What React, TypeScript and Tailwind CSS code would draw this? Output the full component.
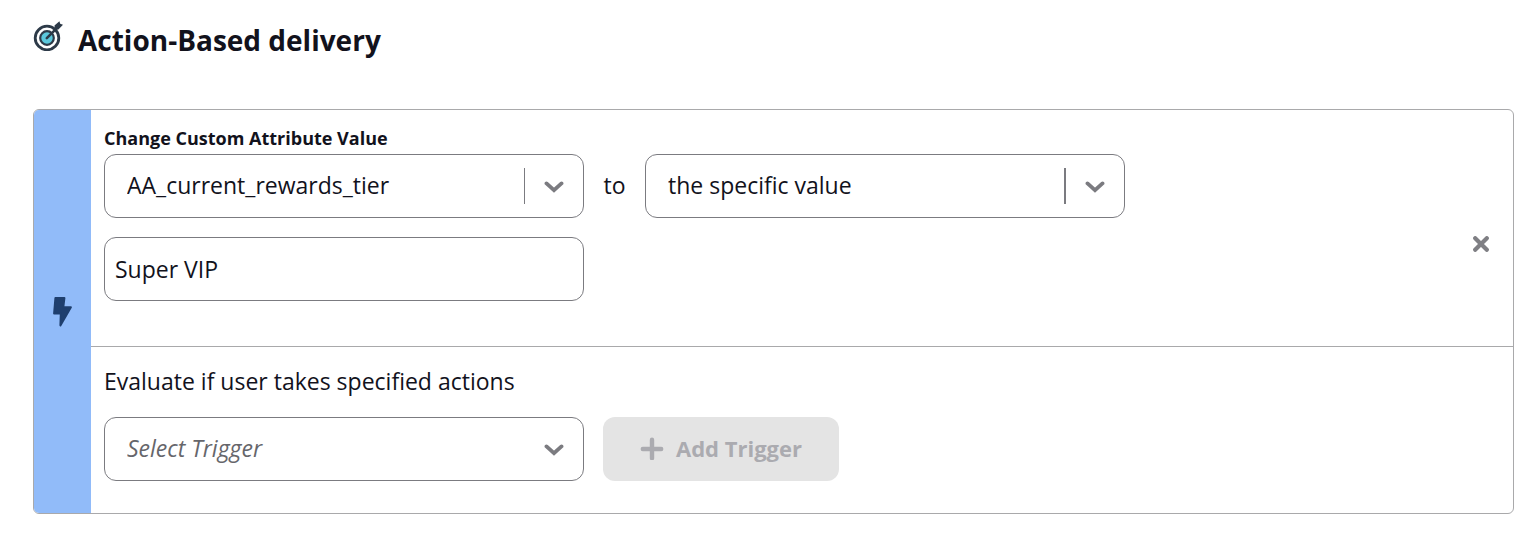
import { useState, type ReactNode } from "react";

function TargetIcon() {
  return (
    <svg viewBox="0 0 30 30" className="size-[30px]" fill="none" aria-hidden="true">
      <circle cx="14" cy="17" r="11.8" stroke="#2d3a48" strokeWidth="2.8" />
      <circle cx="14" cy="17" r="6.8" fill="#5cc8dc" stroke="#2d3a48" strokeWidth="2.2" />
      <path d="M13.8 17.2 25.4 5.6" stroke="#2d3a48" strokeWidth="2.6" strokeLinecap="round" />
      <path d="M21.8 8.8 21.5 4.6 26.4.2l.8 2.6 2.8.9-4.6 4.8Z" fill="#2d3a48" />
    </svg>
  );
}

function BoltIcon() {
  return (
    <svg viewBox="0 0 20 30" className="h-[30px] w-5" fill="#1f3f6e" aria-hidden="true">
      <path
        d="M2.4 1.1h9L10.3 10.3h7.6L7.4 28.4 7.8 16.6H1.1Z"
        stroke="#1f3f6e"
        strokeWidth="2"
        strokeLinejoin="round"
      />
    </svg>
  );
}

function ChevronIcon() {
  return (
    <svg viewBox="0 0 20 14" className="h-3.5 w-5" fill="none" aria-hidden="true">
      <path d="M2.5 4.4 10 11.2l7.5-6.8" stroke="#7b7b80" strokeWidth="3.8" strokeLinecap="round" />
    </svg>
  );
}

function CloseIcon() {
  return (
    <svg viewBox="0 0 16 16" className="size-4" fill="none" aria-hidden="true">
      <path d="m2.2 2.2 11.6 11.6M13.8 2.2 2.2 13.8" stroke="#7f7f84" strokeWidth="4.2" strokeLinecap="round" />
    </svg>
  );
}

function PlusIcon() {
  return (
    <svg viewBox="0 0 24 24" className="size-6" fill="none" aria-hidden="true">
      <path d="M12 3.8v18.4M2.8 13h18.4" stroke="#ababb0" strokeWidth="4.4" strokeLinecap="round" />
    </svg>
  );
}

type DropdownProps = {
  id: string;
  label?: string;
  value: string;
  onChange: (value: string) => void;
  divider?: string;
  className?: string;
  children: ReactNode;
};

function Dropdown({ id, label, value, onChange, divider = "", className = "", children }: DropdownProps) {
  return (
    <div className="grid w-[480px] max-w-full items-center">
      <select
        id={id}
        aria-label={label}
        value={value}
        onChange={(e) => onChange(e.target.value)}
        className={`col-start-1 row-start-1 h-16 w-full appearance-none rounded-xl border border-[#7b7b80] bg-white pr-16 pb-0.5 pl-[22px] text-[23px] ${className}`}
      >
        {children}
      </select>
      <span
        className={`pointer-events-none col-start-1 row-start-1 flex h-9 items-center justify-self-end pr-5 pl-[19px] ${divider}`}
      >
        <ChevronIcon />
      </span>
    </div>
  );
}

export default function App() {
  const [attribute, setAttribute] = useState("tier");
  const [change, setChange] = useState("specific");
  const [value, setValue] = useState("Super VIP");
  const [trigger, setTrigger] = useState("");

  return (
    <main className="bg-white pt-5 pr-[22px] pb-[22px] pl-[33px] font-['Open_Sans','Noto_Sans',sans-serif] text-[23px] text-[#12121c]">
      <header className="mb-[49px] flex h-10 items-center gap-[15px]">
        <span className="pb-2">
          <TargetIcon />
        </span>
        <h1 className="text-[28px] leading-10 font-bold">Action-Based delivery</h1>
      </header>

      <section className="flex overflow-hidden rounded-md border border-[#a9a9ab]">
        <div className="flex w-[57px] shrink-0 items-center justify-center bg-[#91bbf9]">
          <BoltIcon />
        </div>

        <div className="min-w-0 flex-1">
          <div className="flex border-b border-[#a9a9ab] pr-4 pl-[13px]">
            <div className="min-w-0 flex-1 pt-4 pb-[45px]">
              <label htmlFor="attribute" className="mb-1 block w-fit text-lg leading-6 font-bold">
                Change Custom Attribute Value
              </label>
              <div className="flex items-center">
                <Dropdown id="attribute" value={attribute} onChange={setAttribute} divider="border-l border-[#7b7b80]">
                  <option value="tier">AA_current_rewards_tier</option>
                </Dropdown>
                <span className="w-[61px] shrink-0 pb-0.5 text-center">to</span>
                <Dropdown
                  id="change"
                  label="Type of change"
                  value={change}
                  onChange={setChange}
                  divider="border-l-2 border-[#7b7b80]"
                >
                  <option value="specific">the specific value</option>
                </Dropdown>
              </div>
              <input
                type="text"
                aria-label="Attribute value"
                value={value}
                onChange={(e) => setValue(e.target.value)}
                className="mt-[19px] block h-16 w-[480px] max-w-full rounded-xl border border-[#7b7b80] px-[10px]"
              />
            </div>
            <div className="flex items-center pt-8">
              <button type="button" aria-label="Remove trigger" className="p-2">
                <CloseIcon />
              </button>
            </div>
          </div>

          <div className="px-[13px] pt-5 pb-8">
            <label htmlFor="trigger" className="mb-[22px] block w-fit leading-7">
              Evaluate if user takes specified actions
            </label>
            <div className="flex items-center gap-[19px]">
              <Dropdown id="trigger" value={trigger} onChange={setTrigger} className="text-[#66666b] italic">
                <option value="">Select Trigger</option>
              </Dropdown>
              <button
                type="button"
                disabled
                className="flex h-16 w-[236px] items-center justify-center gap-3 rounded-xl bg-[#e4e4e4] pb-0.5 text-[22px] font-bold text-[#ababb0]"
              >
                <PlusIcon />
                Add Trigger
              </button>
            </div>
          </div>
        </div>
      </section>
    </main>
  );
}
